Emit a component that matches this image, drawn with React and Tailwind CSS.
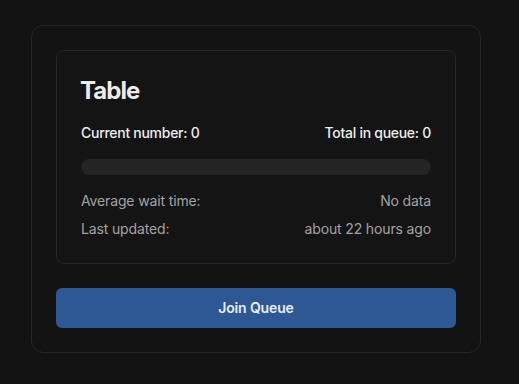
export default function App() {
  return (
    <div className="min-h-[384px] w-full bg-[#131313] pt-[25px] pl-[31px] font-['Inter',sans-serif]">
      <div className="w-[450px] rounded-xl border border-[#262626] bg-[#131313] p-6">
        <div className="rounded-lg border border-[#262626] bg-[#141414] p-6">
          <h2 className="-ml-[1px] text-2xl leading-8 font-bold text-[#ececec] tracking-[-0.04em]">Table</h2>
          <div className="mt-4 flex items-center justify-between text-sm leading-5 font-medium tracking-[-0.02em] text-[#ededed]">
            <span>Current number: 0</span>
            <span>Total in queue: 0</span>
          </div>
          <div className="mt-4 h-4 w-full rounded-full bg-[#242424]"></div>
          <div className="mt-4 flex flex-col gap-2 text-sm leading-5 tracking-[-0.01em] text-[#a3a3a3]">
            <div className="flex justify-between">
              <span>Average wait time:</span>
              <span>No data</span>
            </div>
            <div className="flex justify-between">
              <span>Last updated:</span>
              <span>about 22 hours ago</span>
            </div>
          </div>
        </div>
        <button className="mt-6 flex h-10 w-full items-center justify-center rounded-md bg-[#2d5894] text-sm font-semibold tracking-[-0.01em] text-[#e8ecf2]">
          Join Queue
        </button>
      </div>
    </div>
  );
}
